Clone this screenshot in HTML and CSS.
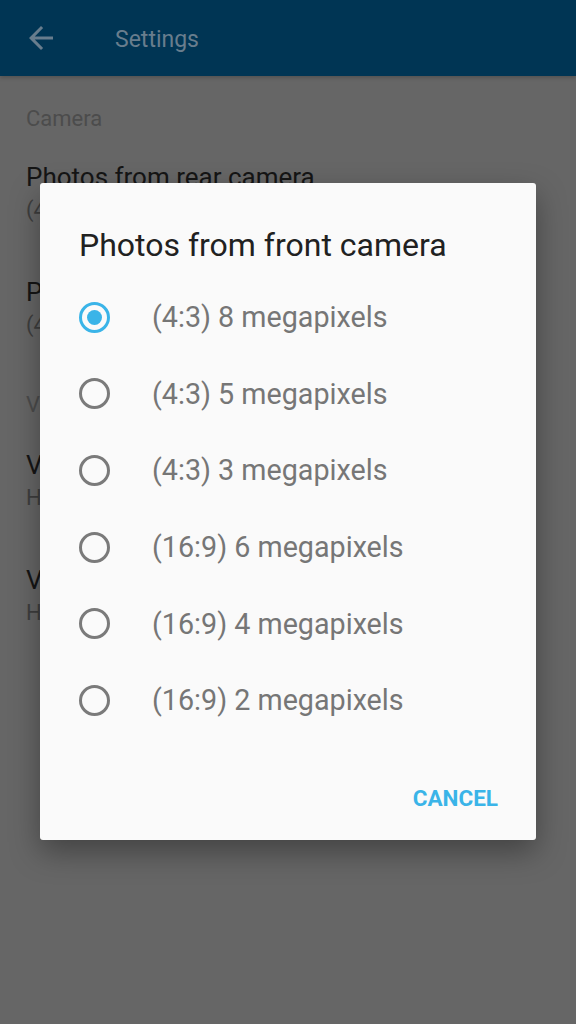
FILE: index.html
```html
<!DOCTYPE html>
<html lang="en">

<head>
    <meta charset="UTF-8">
    <meta name="viewport" content="width=device-width, initial-scale=1.0">
    <title>Settings</title>
    <link rel="stylesheet" href="styles.css">
</head>

<body>
    <header class="app-bar">
        <svg class="back-icon" viewBox="0 0 24 24" width="36" height="36">
            <path d="M20 11H7.83l5.59-5.59L12 4l-8 8 8 8 1.41-1.41L7.83 13H20v-2z" fill="currentColor" />
        </svg>
        <span class="app-title">Settings</span>
    </header>

    <main class="prefs">
        <div class="pref-category first">Camera</div>
        <div class="pref-item">
            <div class="pref-title">Photos from rear camera</div>
            <div class="pref-summary">(4:3) 13 megapixels</div>
        </div>
        <div class="pref-item">
            <div class="pref-title">Photos from front camera</div>
            <div class="pref-summary">(4:3) 8 megapixels</div>
        </div>
        <div class="pref-category">Video</div>
        <div class="pref-item">
            <div class="pref-title">Video from rear camera</div>
            <div class="pref-summary">HD 1080p</div>
        </div>
        <div class="pref-item">
            <div class="pref-title">Video from front camera</div>
            <div class="pref-summary">HD 720p</div>
        </div>
    </main>

    <!-- Single choice dialog -->
    <div class="dialog">
        <h2 class="dialog-title">Photos from front camera</h2>
        <ul class="choice-list">
            <li class="choice checked"><span class="radio"></span>(4:3) 8 megapixels</li>
            <li class="choice"><span class="radio"></span>(4:3) 5 megapixels</li>
            <li class="choice"><span class="radio"></span>(4:3) 3 megapixels</li>
            <li class="choice"><span class="radio"></span>(16:9) 6 megapixels</li>
            <li class="choice"><span class="radio"></span>(16:9) 4 megapixels</li>
            <li class="choice"><span class="radio"></span>(16:9) 2 megapixels</li>
        </ul>
        <div class="dialog-actions">
            <button class="text-btn">CANCEL</button>
        </div>
    </div>
</body>

</html>
```

FILE: styles.css
```css
/* Page (dimmed behind the dialog) */
body {
    margin: 0;
    font-family: Roboto, "Noto Sans", sans-serif;
    background: #666666;
    height: 1024px;
    overflow: hidden;
    position: relative;
}

/* App bar */
.app-bar {
    height: 76px;
    background: #003554;
    display: flex;
    align-items: center;
    padding-left: 23px;
    box-sizing: border-box;
    color: #687d8d;
    box-shadow: 0 2px 4px rgba(0, 0, 0, 0.2);
}

.back-icon {
    display: block;
    margin-top: -1px;
}

.app-title {
    font-size: 23px;
    margin-left: 56px;
    margin-top: 3px;
}

/* Preference list */
.prefs {
    padding: 0 26px;
}

.pref-category {
    height: 58px;
    padding-top: 16px;
    box-sizing: border-box;
    font-size: 22px;
    line-height: 24px;
    color: #4c4c4c;
}

.pref-category.first {
    height: 71px;
    padding-top: 31px;
}

.pref-item {
    height: 115px;
    padding-top: 15px;
    box-sizing: border-box;
}

.pref-title {
    font-size: 26px;
    line-height: 30px;
    color: #151515;
}

.pref-summary {
    font-size: 22px;
    line-height: 36px;
    color: #3e3e3e;
}

/* Dialog */
.dialog {
    position: absolute;
    left: 40px;
    top: 183px;
    width: 496px;
    height: 657px;
    background: #fafafa;
    border-radius: 3px;
    box-shadow: 0 12px 30px rgba(0, 0, 0, 0.35);
    box-sizing: border-box;
    padding: 46px 38px 0 39px;
}

.dialog-title {
    margin: 0;
    font-size: 32px;
    font-weight: 400;
    line-height: 32px;
    color: #212121;
}

.choice-list {
    list-style: none;
    margin: 18px 0 0;
    padding: 0;
}

.choice {
    height: 76.6px;
    display: flex;
    align-items: center;
    font-size: 28.7px;
    color: #767676;
}

.radio {
    width: 31px;
    height: 31px;
    border: 3px solid #7a7a7a;
    border-radius: 50%;
    box-sizing: border-box;
    margin-right: 42px;
    position: relative;
    flex-shrink: 0;
}

.choice.checked .radio {
    border-color: #3ab4e8;
}

.choice.checked .radio::after {
    content: "";
    position: absolute;
    left: 5px;
    top: 5px;
    width: 15px;
    height: 15px;
    border-radius: 50%;
    background: #3ab4e8;
}

.dialog-actions {
    display: flex;
    justify-content: flex-end;
    margin-top: 44px;
}

.text-btn {
    border: none;
    background: none;
    padding: 0;
    font-family: Roboto, sans-serif;
    font-size: 22.5px;
    font-weight: 700;
    color: #3ab4e8;
    line-height: 30px;
}
```
